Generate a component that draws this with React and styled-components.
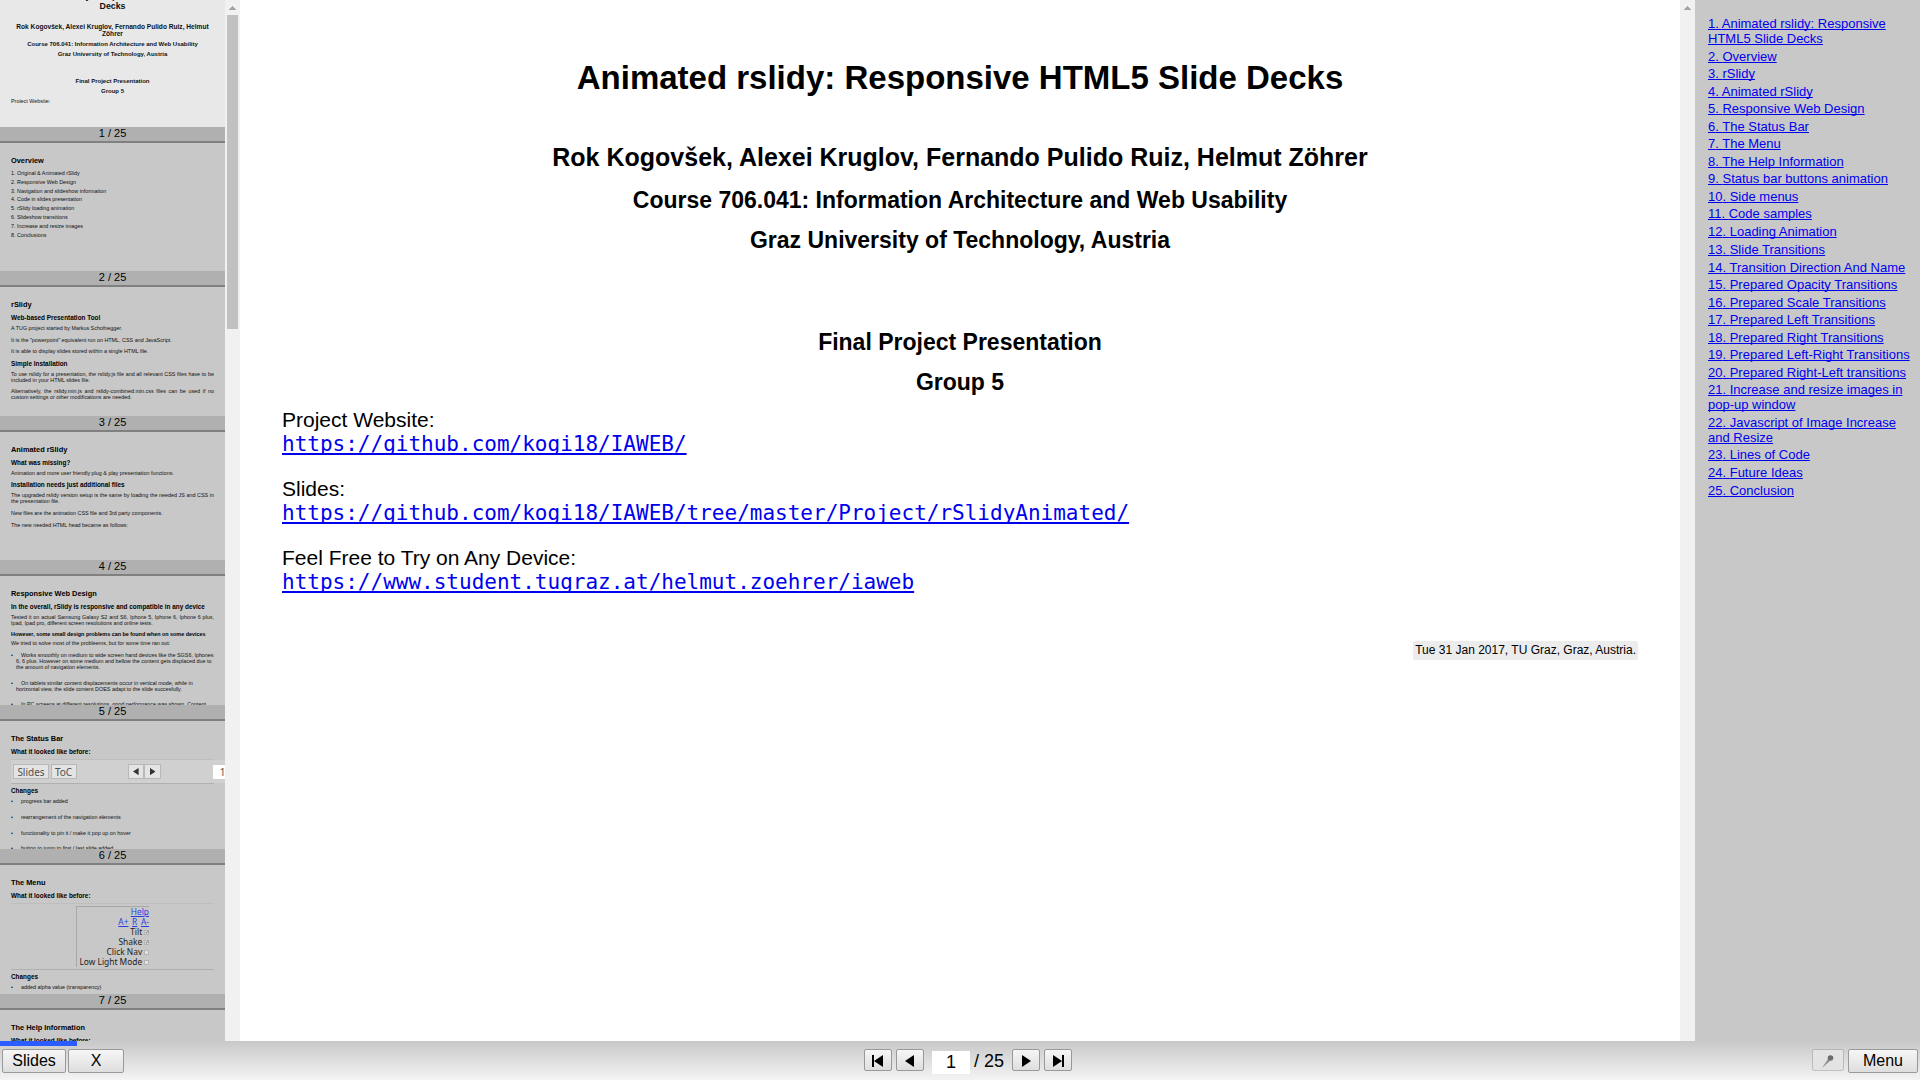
import React from "react";
import styled, { createGlobalStyle } from "styled-components";

const sans = `"Liberation Sans", Arial, sans-serif`;
const mono = `"DejaVu Sans Mono", monospace`;

const GlobalStyle = createGlobalStyle`
  *, *::before, *::after { box-sizing: border-box; }
  html, body, #root { height: 100%; }
  body { margin: 0; background: #fff; color: #000; font-family: ${sans}; overflow: hidden; }
  h1, h2, h3, h4, p, ol, ul, figure { margin: 0; padding: 0; }
  ol, ul { list-style: none; }
  a { color: #0000ee; text-decoration-skip-ink: none; }
`;

const Page = styled.div`
  height: 100vh;
  display: flex;
  flex-direction: column;
`;

const Workspace = styled.div`
  flex: 1;
  min-height: 0;
  display: flex;
`;

/* scrollbars */
const Track = styled.div`
  flex: none;
  width: 15px;
  padding: 0 2px;
  background: #f1f1f1;
`;
const Arrow = styled.div`
  height: 15px;
  display: flex;
  align-items: center;
  justify-content: center;
`;
const ScrollThumb = styled.div`
  height: 314px;
  background: #c1c1c1;
`;

function Scrollbar({ thumb }) {
  return (
    <Track aria-hidden="true">
      <Arrow>
        <svg width="7" height="4" viewBox="0 0 7 4" shapeRendering="crispEdges">
          <path d="M3 0h1v1h1v1h1v1h1v1H0V3h1V2h1V1h1z" fill="#a3a3a3" />
        </svg>
      </Arrow>
      {thumb && <ScrollThumb />}
    </Track>
  );
}

/* slide previews: slides set at full size and zoomed down to a fifth */
const Previews = styled.aside`
  flex: none;
  width: 225px;
  overflow: hidden;
  background: #c8c8c8;
`;
const Preview = styled.div`
  height: 128px;
  overflow: hidden;
  background: ${(p) => (p.$current ? "#e8e8e8" : "#c8c8c8")};
`;
const Thumb = styled.li`
  border-bottom: 2px solid #808080;
  &:nth-child(odd) ${Preview} { height: 129px; }
  &:first-child ${Preview} { height: 127px; }
`;
const Caption = styled.div`
  height: 14px;
  background: #b0b0b0;
  font-size: 11px;
  line-height: 12px;
  text-align: center;
`;
const Mini = styled.div`
  zoom: 0.2;
  padding: 68px 55px 0;
  color: #111;
  font-size: 27px;
  line-height: 30px;
`;
const MiniCover = styled(Mini)`
  height: 515px;
  overflow: hidden;
  padding-top: 0;
`;
const CoverTitle = styled.h2`
  margin-top: -45px;
  font-size: 44px;
  line-height: 50px;
  text-align: center;
`;
const CoverAuthors = styled.h3`
  margin: 60px 0 20px;
  font-size: 33px;
  line-height: 35px;
  text-align: center;
`;
const CoverLine = styled.h4`
  margin-bottom: ${(p) => (p.$apart ? 100 : 15)}px;
  font-size: 30px;
  line-height: 35px;
  text-align: center;
`;
const MiniTitle = styled.h2`
  color: #000;
  font-size: 37px;
  line-height: 42px;
`;
const MiniHead = styled.h3`
  margin: 26px 0 20px;
  color: #000;
  font-size: 32px;
  line-height: 35px;
  figure + & { margin-top: 17px; }
`;
const MiniSubhead = styled.h4`
  margin: 25px 0 15px;
  color: #000;
  font-size: 27px;
  line-height: 30px;
`;
const MiniText = styled.p`
  text-align: justify;
  & + & { margin-top: 28px; }
`;
const MiniNumbers = styled.ol`
  margin-top: 20px;
  line-height: 44px;
`;
const MiniBullets = styled.ul`
  ${MiniText} + & { margin-top: 30px; }
`;
const MiniBullet = styled.li`
  margin-bottom: 48px;
  padding-left: 25px;
  text-indent: -25px;
  &::before {
    content: "•";
    display: inline-block;
    width: 50px;
    text-indent: 0;
  }
`;
const MiniFigure = styled.figure`
  border-top: 5px solid #bebebe;
  border-bottom: 5px solid #b0b0b0;
  font-family: "Noto Sans", sans-serif;
`;
const OldBar = styled.div`
  width: 1070px;
  height: 114px;
  padding: 0 8px;
  display: flex;
  align-items: center;
  gap: 6px;
  background: #d0d0d0;
  color: #505050;
  font-size: 50px;
  line-height: 70px;
`;
const OldKey = styled.span`
  flex: none;
  width: ${(p) => p.$w}px;
  height: 72px;
  display: flex;
  align-items: center;
  justify-content: center;
  background: #e4e4e4;
  border: 3px solid #b8b8b8;
`;
const OldKeys = styled.span`
  flex: none;
  display: flex;
  margin-left: 250px;
`;
const OldPage = styled.span`
  flex: none;
  margin-left: 252px;
  width: 150px;
  padding-left: 36px;
  background: #fff;
`;
const OldMenuFrame = styled.div`
  padding: 8px 0 10px;
  display: flex;
  justify-content: center;
`;
const OldMenu = styled.div`
  width: 365px;
  border-top: 4px solid #a8a8a8;
  border-left: 4px solid #a8a8a8;
  color: #222;
  font-size: 42px;
  line-height: 50px;
  text-align: right;
  white-space: nowrap;
`;
const OldLink = styled.span`
  margin-left: 18px;
  color: #2a3fe0;
  text-decoration: underline;
`;
const OldTick = styled.span`
  display: inline-block;
  width: 24px;
  height: 24px;
  margin-left: 10px;
  background: #e2e2e2;
  border: 3px solid #b4b4b4;
  color: #333;
  font-size: 24px;
  line-height: 18px;
  vertical-align: middle;
  text-align: center;
`;

/* current slide */
const Stage = styled.main`
  flex: 1;
  min-width: 0;
  padding: 59px 42px 0;
  background: #fff;
`;
const SlideTitle = styled.h1`
  font-size: 33px;
  line-height: 38px;
  text-align: center;
`;
const SlideAuthors = styled.h2`
  margin: 46px 0 16px;
  font-size: 25px;
  line-height: 28px;
  text-align: center;
`;
const SlideLine = styled.h3`
  margin-bottom: ${(p) => p.$gap || 14}px;
  font-size: 23px;
  line-height: 26px;
  text-align: center;
`;
const SlideText = styled.p`
  margin-bottom: 21px;
  font-size: 21px;
  line-height: 24px;
`;
const CodeLink = styled.a`
  display: block;
  width: fit-content;
  font-family: ${mono};
  font-size: 21px;
  line-height: 24px;
`;
const DateRow = styled.footer`
  margin-top: 47px;
  display: flex;
  justify-content: flex-end;
`;
const DateTag = styled.span`
  padding: 0 2px;
  border-radius: 2px;
  background: #ececec;
  font-size: 12px;
  line-height: 19px;
`;

/* table of contents */
const Contents = styled.nav`
  flex: none;
  width: 225px;
  padding: 16px 8px 0 13px;
  background: #c8c8c8;
  font-size: 13px;
  line-height: 15px;
`;
const ContentsItem = styled.li`
  margin-bottom: 2px;
  &:nth-child(odd), &:nth-child(12n) { margin-bottom: 3px; }
`;

/* status bar */
const StatusBar = styled.footer`
  position: relative;
  flex: none;
  height: 39px;
  padding: 8px 2px 0;
  display: flex;
  align-items: flex-start;
  justify-content: space-between;
  background: linear-gradient(#c8c8c8, #f4f4f4);
`;
const Progress = styled.div`
  position: absolute;
  top: 0;
  left: 0;
  width: 4%;
  height: 5px;
  background: #2a5cff;
`;
const Group = styled.div`
  display: flex;
  align-items: flex-start;
  gap: ${(p) => p.$gap}px;
`;
const Button = styled.button`
  width: ${(p) => p.$w}px;
  height: 24px;
  padding: 0;
  display: flex;
  align-items: center;
  justify-content: center;
  border: 1px solid #999;
  border-radius: 2px;
  background: linear-gradient(#f6f6f6, #dedede);
  color: #000;
  font-family: ${sans};
  font-size: 16px;
  line-height: 20px;
  opacity: ${(p) => (p.$faded ? 0.5 : 1)};
`;
const IconButton = styled(Button)`
  height: 22px;
  padding-top: 2px;
`;
const PageLabel = styled.label`
  display: flex;
  align-items: flex-start;
  gap: 4px;
  margin: 0 4px;
  font-size: 18px;
  line-height: 24px;
`;
const PageInput = styled.input`
  width: 38px;
  height: 23px;
  margin: 2px 0 0;
  padding: 0;
  border: 0;
  background: #fff;
  font-family: ${sans};
  font-size: 18px;
  text-align: center;
`;

const contents = [
  "Animated rslidy: Responsive HTML5 Slide Decks",
  "Overview",
  "rSlidy",
  "Animated rSlidy",
  "Responsive Web Design",
  "The Status Bar",
  "The Menu",
  "The Help Information",
  "Status bar buttons animation",
  "Side menus",
  "Code samples",
  "Loading Animation",
  "Slide Transitions",
  "Transition Direction And Name",
  "Prepared Opacity Transitions",
  "Prepared Scale Transitions",
  "Prepared Left Transitions",
  "Prepared Right Transitions",
  "Prepared Left-Right Transitions",
  "Prepared Right-Left transitions",
  "Increase and resize images in pop-up window",
  "Javascript of Image Increase and Resize",
  "Lines of Code",
  "Future Ideas",
  "Conclusion",
];

const overview = [
  "Original & Animated rSlidy",
  "Responsive Web Design",
  "Navigation and slideshow information",
  "Code in slides presentation",
  "rSlidy loading animation",
  "Slideshow transitions",
  "Increase and resize images",
  "Conclusions",
];

const links = [
  ["Project Website:", "https://github.com/kogi18/IAWEB/"],
  ["Slides:", "https://github.com/kogi18/IAWEB/tree/master/Project/rSlidyAnimated/"],
  ["Feel Free to Try on Any Device:", "https://www.student.tugraz.at/helmut.zoehrer/iaweb"],
];

const authors = "Rok Kogovšek, Alexei Kruglov, Fernando Pulido Ruiz, Helmut Zöhrer";
const course = "Course 706.041: Information Architecture and Web Usability";

const previews = [
  <MiniCover>
    <CoverTitle>Animated rslidy: Responsive HTML5 Slide Decks</CoverTitle>
    <CoverAuthors>{authors}</CoverAuthors>
    <CoverLine>{course}</CoverLine>
    <CoverLine $apart>Graz University of Technology, Austria</CoverLine>
    <CoverLine>Final Project Presentation</CoverLine>
    <CoverLine>Group 5</CoverLine>
    <MiniText>Project Website:</MiniText>
  </MiniCover>,
  <Mini>
    <MiniTitle>Overview</MiniTitle>
    <MiniNumbers>
      {overview.map((t, i) => (
        <li key={t}>{i + 1}. {t}</li>
      ))}
    </MiniNumbers>
  </Mini>,
  <Mini>
    <MiniTitle>rSlidy</MiniTitle>
    <MiniHead>Web-based Presentation Tool</MiniHead>
    <MiniText>A TUG project started by Markus Schofnegger.</MiniText>
    <MiniText>It is the "powerpoint" equivalent run on HTML, CSS and JavaScript.</MiniText>
    <MiniText>It is able to display slides stored within a single HTML file.</MiniText>
    <MiniHead>Simple Installation</MiniHead>
    <MiniText>To use rslidy for a presentation, the rslidy.js file and all relevant CSS files have to be included in your HTML slides file.</MiniText>
    <MiniText>Alternatively, the rslidy.min.js and rslidy-combined.min.css files can be used if no custom settings or other modifications are needed.</MiniText>
  </Mini>,
  <Mini>
    <MiniTitle>Animated rSlidy</MiniTitle>
    <MiniHead>What was missing?</MiniHead>
    <MiniText>Animation and more user friendly plug & play presentation functions.</MiniText>
    <MiniHead>Installation needs just additional files</MiniHead>
    <MiniText>The upgraded rslidy version setup is the same by loading the needed JS and CSS in the presentation file.</MiniText>
    <MiniText>New files are the animation CSS file and 3rd party components.</MiniText>
    <MiniText>The new needed HTML head became as follows:</MiniText>
  </Mini>,
  <Mini>
    <MiniTitle>Responsive Web Design</MiniTitle>
    <MiniHead>In the overall, rSlidy is responsive and compatible in any device</MiniHead>
    <MiniText>Tested it on actual Samsung Galaxy S2 and S6, Iphone 5, Iphone 6, Iphone 6 plus, Ipad, Ipad pro, different screen resolutions and online tests.</MiniText>
    <MiniSubhead>However, some small design problems can be found when on some devices</MiniSubhead>
    <MiniText>We tried to solve most of the probleems, but for some time ran out:</MiniText>
    <MiniBullets>
      <MiniBullet>Works smoothly on medium to wide screen hand devices like the SGS6, Iphones 6, 6 plus. However on some medium and bellow the content gets displaced due to the amount of navigation elements.</MiniBullet>
      <MiniBullet>On tablets similar content displacements occur in vertical mode, while in horizontal view, the slide content DOES adapt to the slide succesfully.</MiniBullet>
      <MiniBullet>In PC screens at different resolutions, good performance was shown. Content</MiniBullet>
    </MiniBullets>
  </Mini>,
  <Mini>
    <MiniTitle>The Status Bar</MiniTitle>
    <MiniHead>What it looked like before:</MiniHead>
    <MiniFigure>
      <OldBar>
        <OldKey $w={184}>Slides</OldKey>
        <OldKey $w={130}>ToC</OldKey>
        <OldKeys>
          <OldKey $w={83}>
            <svg width="28" height="36" viewBox="0 0 22 28"><path d="M22 0v28L0 14z" fill="#333" /></svg>
          </OldKey>
          <OldKey $w={83}>
            <svg width="28" height="36" viewBox="0 0 22 28"><path d="M0 0v28l22-14z" fill="#333" /></svg>
          </OldKey>
        </OldKeys>
        <OldPage>1</OldPage>
      </OldBar>
    </MiniFigure>
    <MiniHead>Changes</MiniHead>
    <MiniBullets>
      <MiniBullet>progress bar added</MiniBullet>
      <MiniBullet>rearrangement of the navigation elements</MiniBullet>
      <MiniBullet>functionality to pin it / make it pop up on hover</MiniBullet>
      <MiniBullet>button to jump to first / last slide added</MiniBullet>
    </MiniBullets>
  </Mini>,
  <Mini>
    <MiniTitle>The Menu</MiniTitle>
    <MiniHead>What it looked like before:</MiniHead>
    <MiniFigure>
      <OldMenuFrame>
        <OldMenu>
          <div><OldLink>Help</OldLink></div>
          <div><OldLink>A+</OldLink><OldLink>R</OldLink><OldLink>A-</OldLink></div>
          <div>Tilt<OldTick>✓</OldTick></div>
          <div>Shake<OldTick>✓</OldTick></div>
          <div>Click Nav<OldTick /></div>
          <div>Low Light Mode<OldTick /></div>
        </OldMenu>
      </OldMenuFrame>
    </MiniFigure>
    <MiniHead>Changes</MiniHead>
    <MiniBullets>
      <MiniBullet>added alpha value (transparency)</MiniBullet>
    </MiniBullets>
  </Mini>,
  <Mini>
    <MiniTitle>The Help Information</MiniTitle>
    <MiniHead>What it looked like before:</MiniHead>
  </Mini>,
];

const arrows = {
  first: { width: 11, path: "M0 0h2v12H0zM11 0v12L2 6z" },
  prev: { width: 9, path: "M9 0v12L0 6z" },
  next: { width: 9, path: "M0 0v12l9-6z" },
  last: { width: 11, path: "M0 0v12l9-6zM9 0h2v12h-2z" },
};

function NavButton({ kind, label }) {
  const { width, path } = arrows[kind];
  return (
    <IconButton type="button" $w={28} aria-label={label}>
      <svg width={width} height="12" viewBox={`0 0 ${width} 12`}>
        <path d={path} fill="#000" />
      </svg>
    </IconButton>
  );
}

export default function App() {
  return (
    <Page>
      <GlobalStyle />
      <Workspace>
        <Previews>
          <ol>
            {previews.map((slide, i) => (
              <Thumb key={i}>
                <Preview $current={i === 0}>{slide}</Preview>
                <Caption>{i + 1} / 25</Caption>
              </Thumb>
            ))}
          </ol>
        </Previews>
        <Scrollbar thumb />
        <Stage>
          <SlideTitle>Animated rslidy: Responsive HTML5 Slide Decks</SlideTitle>
          <SlideAuthors>{authors}</SlideAuthors>
          <SlideLine>{course}</SlideLine>
          <SlideLine $gap={76}>Graz University of Technology, Austria</SlideLine>
          <SlideLine>Final Project Presentation</SlideLine>
          <SlideLine $gap={13}>Group 5</SlideLine>
          {links.map(([label, url]) => (
            <SlideText key={url}>
              {label}
              <CodeLink href={url}>{url}</CodeLink>
            </SlideText>
          ))}
          <DateRow>
            <DateTag>Tue 31 Jan 2017, TU Graz, Graz, Austria.</DateTag>
          </DateRow>
        </Stage>
        <Scrollbar />
        <Contents aria-label="Table of contents">
          <ol>
            {contents.map((title, i) => (
              <ContentsItem key={title}>
                <a href={`#${i + 1}`}>{i + 1}. {title}</a>
              </ContentsItem>
            ))}
          </ol>
        </Contents>
      </Workspace>
      <StatusBar>
        <Progress />
        <Group $gap={2}>
          <Button type="button" $w={64}>Slides</Button>
          <Button type="button" $w={56}>X</Button>
        </Group>
        <Group $gap={4}>
          <NavButton kind="first" label="First slide" />
          <NavButton kind="prev" label="Previous slide" />
          <PageLabel>
            <PageInput type="text" defaultValue="1" aria-label="Slide number" />
            / 25
          </PageLabel>
          <NavButton kind="next" label="Next slide" />
          <NavButton kind="last" label="Last slide" />
        </Group>
        <Group $gap={4}>
          <IconButton type="button" $w={32} $faded aria-label="Pin status bar">
            <svg width="12" height="13" viewBox="0 0 12 13">
              <path d="M0 13L6 4l2 2z" fill="#444" />
              <circle cx="8.5" cy="3" r="2.8" fill="#000" />
            </svg>
          </IconButton>
          <Button type="button" $w={70}>Menu</Button>
        </Group>
      </StatusBar>
    </Page>
  );
}
